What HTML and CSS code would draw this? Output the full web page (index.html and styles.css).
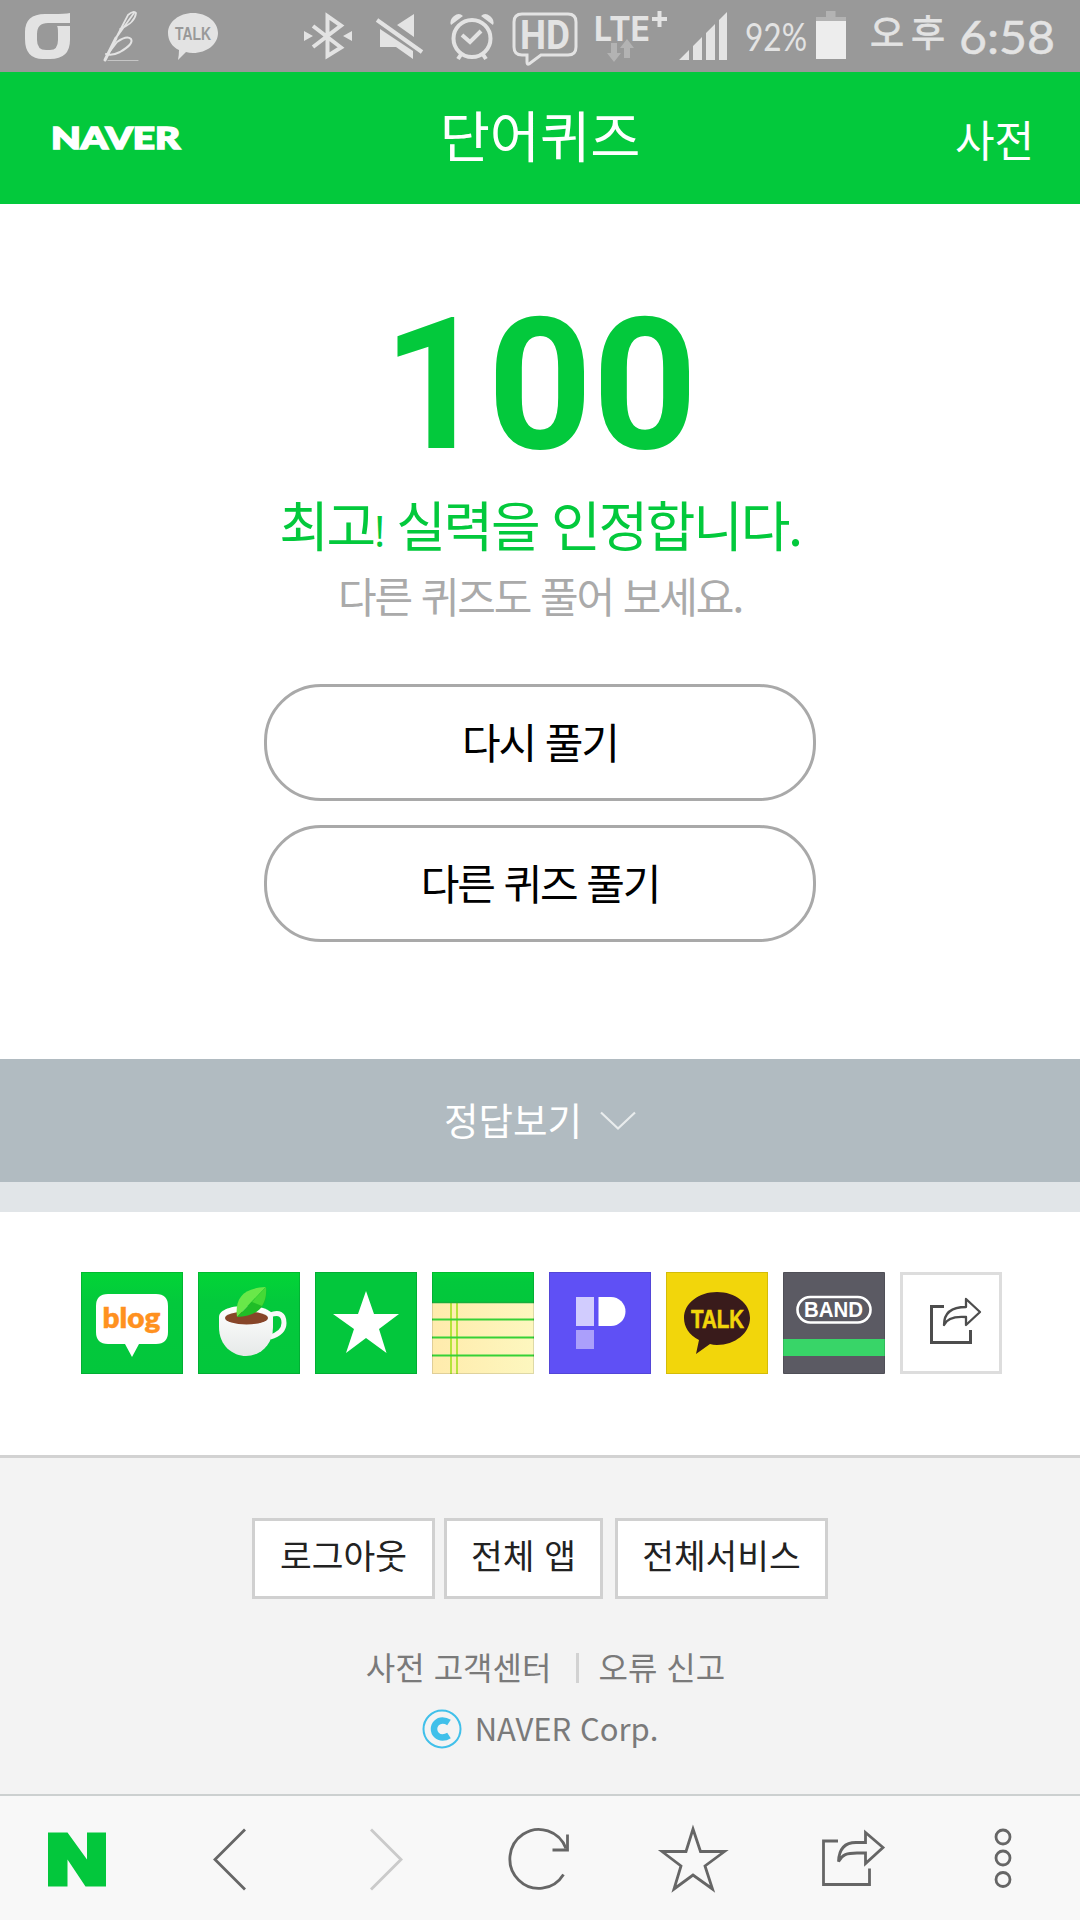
FILE: index.html
```html
<!DOCTYPE html>
<html lang="ko">
<head>
<meta charset="utf-8">
<title>단어퀴즈</title>
<link rel="stylesheet" href="styles.css">
</head>
<body>
<div class="status">
  <svg class="status-left" width="240" height="72" viewBox="0 0 240 72">
    <path fill="#e3e3e3" d="M70 13v10H48q-11 0-11 11v6q0 10 9 10h4q8 0 8-10v-7q0-6-1-7h13v14q0 19-20 19h-7q-18 0-18-20v-7q0-18 20-18h8q12 0 17-1z"/>
    <g fill="none" stroke="#e3e3e3" stroke-linecap="round">
      <path stroke-width="3" d="M105 60L116 38"/>
      <path stroke-width="1.800" d="M116 38L128 15q6-5 8-2q-1 10-16 16M116 38L134 13"/>
      <path stroke-width="2" d="M106 54q6 2 14-2q14-8 11-13q-4-4-14 3l-7 9"/>
      <path stroke-width="1.200" opacity=".6" d="M108 60.500h30"/>
    </g>
    <path fill="#e3e3e3" d="M193 13c14 0 25 9 25 20s-11 20-25 20q-4 0-7-1l-8 8q1-6 1-10c-7-3-11-10-11-17c0-11 11-20 25-20z"/>
    <text x="175" y="39.500" class="talk-small" textLength="36" lengthAdjust="spacingAndGlyphs">TALK</text>
  </svg>
  <svg class="status-right" width="790" height="72" viewBox="290 0 790 72">
    <g fill="none" stroke="#e3e3e3" stroke-width="4">
      <path d="M313 26L341 47.500L327.500 56V16L341 25.500L313 47"/>
      <path d="M377 20L422 52"/>
      <circle cx="472" cy="38.500" r="18.500"/>
      <path d="M462 35l8 7l11-11M462 53l-4 6M482 53l4 6"/>
      <path d="M522 14h46q8 0 8 8v25q0 8-8 8h-27l-12 9q-2 1-2-2v-7h-5q-8 0-8-8V22q0-8 8-8z" stroke-width="3"/>
    </g>
    <g fill="#e3e3e3">
      <path d="M304 31l9 5l-9 5zM352 31l-9 5l9 5zM397 25l17-11v23zM380 29l33 22v8l-17-12h-16z"/>
      <path d="M451 25q-2-5 3-9q5-4 9 0zM493 25q2-5-3-9q-5-4-9 0z"/>
      <path d="M679 60l10-10v10zM693 46l9-9v23h-9zM706 33l9-9v36h-9zM719 20l8-8v48h-8z"/>
      <rect x="816" y="21" width="30" height="38" fill="#ededed"/>
    </g>
    <path fill="#b3b3b3" d="M816 17h10v-6h9.500v6h10.500v4h-30zM611 43h6v10h4l-7 9l-7-9h4zM624 58h6V48h4l-7-9l-7 9h4z"/>
    <text x="520" y="49" class="hd" textLength="50" lengthAdjust="spacingAndGlyphs">HD</text>
    <text x="594" y="41" class="lte" textLength="56" lengthAdjust="spacingAndGlyphs">LTE</text>
    <path d="M652 19h15M659.500 11v16" stroke="#e3e3e3" stroke-width="4"/>
    <text x="745" y="51" class="battery-text" textLength="62" lengthAdjust="spacingAndGlyphs">92%</text>
    <text x="870" y="47" class="meridiem" textLength="75" lengthAdjust="spacing">오후</text>
    <text x="959" y="54" class="clock" textLength="96" lengthAdjust="spacingAndGlyphs">6:58</text>
  </svg>
</div>

<header class="header">
  <svg class="logo" width="140" height="50" viewBox="0 0 140 50"><text x="1" y="36" textLength="129" lengthAdjust="spacingAndGlyphs">NAVER</text></svg>
  <h1>단어퀴즈</h1>
  <a class="dict">사전</a>
</header>

<main class="result">
  <div class="score">100</div>
  <p class="praise">최고<span class="bang">!</span> 실력을 인정합니다.</p>
  <p class="hint">다른 퀴즈도 풀어 보세요.</p>
  <div class="actions">
    <button>다시 풀기</button>
    <button>다른 퀴즈 풀기</button>
  </div>
</main>

<div class="answers">
  <span>정답보기</span>
  <svg width="36" height="20" viewBox="0 0 36 20"><path d="M1 1.500l17 16l17-16" fill="none" stroke="#e9eced" stroke-width="2.200"/></svg>
</div>

<section class="share">
  <svg class="tile" viewBox="0 0 102 102">
    <defs>
      <linearGradient id="green" x1="0" y1="0" x2="0" y2="1"><stop offset="0" stop-color="#02d536"/><stop offset=".3" stop-color="#03c93c"/><stop offset="1" stop-color="#03c73c"/></linearGradient>
      <linearGradient id="cup" x1="0" y1="0" x2="0" y2="1"><stop offset="0" stop-color="#fff"/><stop offset="1" stop-color="#e6e9e8"/></linearGradient>
      <linearGradient id="paper"><stop offset="0" stop-color="#ffebac"/><stop offset="1" stop-color="#fdf7bf"/></linearGradient>
    </defs>
    <rect width="102" height="102" fill="url(#green)"/>
    <path fill="#fff" d="M27 22h48q12 0 12 12v26q0 12-12 12H58L51 85L44 72H27q-12 0-12-12V34q0-12 12-12z"/>
    <text x="21.500" y="56" class="blog" textLength="58" lengthAdjust="spacingAndGlyphs">blog</text>
    <rect class="edge" x=".5" y=".5" width="101" height="101"/>
  </svg>
  <svg class="tile" viewBox="0 0 102 102">
    <rect width="102" height="102" fill="url(#green)"/>
    <path d="M72 43q14-5 14 8q0 10-14 14" fill="none" stroke="#f8f8f8" stroke-width="5"/>
    <path fill="url(#cup)" d="M21 45c0-15 54-15 54 0v10c0 19-14 29-27 29S21 74 21 55z"/>
    <ellipse cx="48.500" cy="46" rx="21.500" ry="6.500" fill="#874529"/>
    <path fill="#69e849" d="M39 45C37 28 43 16 68 15z"/>
    <path fill="#20bd27" d="M39 45L68 15C70 33 61 44 39 45z"/>
    <path fill="#45d936" d="M54 30L68 15Q69 26 64 34z"/>
    <rect class="edge" x=".5" y=".5" width="101" height="101"/>
  </svg>
  <svg class="tile" viewBox="0 0 102 102">
    <rect width="102" height="102" fill="#03c73c"/>
    <path fill="#fff" d="M51 19L59 42H84L64 57L71.500 81L51 66L31 81L39 57L18 42H43z"/>
    <rect class="edge" x=".5" y=".5" width="101" height="101"/>
  </svg>
  <svg class="tile" viewBox="0 0 102 102">
    <rect width="102" height="102" fill="url(#paper)"/>
    <rect width="102" height="31" fill="url(#green)"/>
    <path d="M19 31v71M25 31v71" stroke="#b5e33c" stroke-width="2"/>
    <path d="M0 47.500h102M0 65.500h102M0 83.500h102" stroke="#36d136" stroke-width="2"/>
    <path d="M0 30.500h102" stroke="#16af3c" stroke-width="1.500"/>
    <rect class="edge" x=".5" y=".5" width="101" height="101"/>
  </svg>
  <svg class="tile" viewBox="0 0 102 102">
    <rect width="102" height="102" fill="#5f50f5"/>
    <rect x="27" y="25" width="18" height="29" fill="#d1ccfe"/>
    <rect x="27" y="58" width="18" height="19" fill="#ab9ffb"/>
    <path fill="#fff" d="M49.500 25H62a14.500 14.500 0 0 1 0 29H49.500z"/>
    <rect class="edge" x=".5" y=".5" width="101" height="101"/>
  </svg>
  <svg class="tile" viewBox="0 0 102 102">
    <rect width="102" height="102" fill="#f2d60b"/>
    <path fill="#391b1b" d="M51 20c18 0 33 11 33 26S69 73 51 73q-4 0-7-1L30 82l3-14c-10-5-15-13-15-22c0-15 15-26 33-26z"/>
    <text x="25" y="56" class="talk" textLength="53" lengthAdjust="spacingAndGlyphs">TALK</text>
    <rect class="edge" x=".5" y=".5" width="101" height="101"/>
  </svg>
  <svg class="tile" viewBox="0 0 102 102">
    <rect width="102" height="102" rx="1" fill="#5b5a63"/>
    <rect y="67" width="102" height="17" fill="#38d568"/>
    <rect x="14.500" y="25" width="73" height="25.500" rx="12.700" fill="none" stroke="#fff" stroke-width="2.600"/>
    <text x="21" y="45" class="band" textLength="59" lengthAdjust="spacingAndGlyphs">BAND</text>
    <rect class="edge" x=".5" y=".5" width="101" height="101"/>
  </svg>
  <svg class="tile" viewBox="0 0 102 102">
    <rect x="1.500" y="1.500" width="99" height="99" fill="#fff" stroke="#ddd" stroke-width="3"/>
    <g fill="none" stroke="#4d4d4d" stroke-width="3"><path d="M44 34.500H31.500V70.500H70.500V58"/><path stroke-width="2.300" stroke-linejoin="round" d="M44 53C44 41 52 35 66 35V27L80 40L66 53V45C54 44 47 46 44 53z"/></g>
  </svg>
</section>

<footer class="footer">
  <nav class="links">
    <a class="logout">로그아웃</a>
    <a class="apps">전체 앱</a>
    <a class="services">전체서비스</a>
  </nav>
  <div class="support"><span>사전 고객센터</span><i></i><span>오류 신고</span></div>
  <div class="copyright">
    <svg width="40" height="40" viewBox="0 0 40 40"><circle cx="20" cy="20" r="18.500" fill="none" stroke="#40c0ea" stroke-width="2"/><path d="M27 13.500Q24 11.500 20.500 11.500A8.500 8.500 0 0 0 20.500 28.500Q24 28.500 27 26.500" fill="none" stroke="#40c0ea" stroke-width="6.500"/></svg>
    <span>NAVER Corp.</span>
  </div>
</footer>

<nav class="toolbar">
  <svg viewBox="0 1.500 154 124"><path fill="#03c73c" d="M48 38H67.500L87 65V38H106V92H85.500L67.500 65V92H48z"/></svg>
  <svg viewBox="154 1.500 154 124"><path d="M245 35L215 65L245 95"/></svg>
  <svg viewBox="309 1.500 154 124"><path stroke="#cacaca" d="M371 35L401 65L371 95"/></svg>
  <svg viewBox="463 1.500 154 124"><path d="M563.500 80A29 29.500 0 1 1 566 54"/><path d="M567.500 40V55.500H552.500"/></svg>
  <svg viewBox="617 1.500 154 124"><path d="M693 34.500L700.500 57H724.500L705 71.500L712.500 94.500L693 80.500L674 94.500L681 71.500L662 57H686z"/></svg>
  <svg viewBox="771 1.500 154 124"><path d="M838 46.500H823.500V90H869.500V74"/><path d="M838.500 67C839 54 845 48 856 48H865.500V38L883 53L865.500 69V58.500H857C847 58.500 842 60 838.500 67z"/></svg>
  <svg viewBox="926 1.500 154 124"><circle cx="1003" cy="42.500" r="7"/><circle cx="1003" cy="63.500" r="7"/><circle cx="1003" cy="85" r="7"/></svg>
</nav>
</body>
</html>
```
FILE: styles.css
```css
* { box-sizing: border-box; }
body {
  margin: 0;
  width: 1080px;
  height: 1920px;
  display: flex;
  flex-direction: column;
  overflow: hidden;
  background: #fff;
  font-family: "Noto Sans CJK KR", sans-serif;
}
svg { display: block; flex: none; }
h1, p { margin: 0; font-weight: 400; }

.status {
  height: 72px;
  flex: none;
  display: flex;
  justify-content: space-between;
  background: #999;
}
.status text { fill: #e3e3e3; }
.status .talk-small { fill: #999; font: 700 19px "Liberation Sans", sans-serif; }
.hd { font: 700 41px Roboto, sans-serif; }
.lte { font: 700 34px Inter, sans-serif; }
.battery-text { font: 400 39px Lato, sans-serif; }
.meridiem { font: 400 37px "Noto Sans CJK KR", sans-serif; stroke: #e3e3e3; stroke-width: .8px; }
.clock { font: 400 47px Lato, sans-serif; stroke: #e3e3e3; stroke-width: .5px; }

.header {
  height: 132px;
  flex: none;
  display: grid;
  grid-template-columns: 1fr auto 1fr;
  align-items: center;
  padding: 0 46px 0 46px;
  background: #03c93c;
  color: #fff;
}
.logo { margin-left: 4px; }
.logo text { font: 900 31px Lato, sans-serif; fill: #fff; stroke: #fff; stroke-width: 1.6px; }
.header h1 { padding-bottom: 8px; font-size: 54.5px; line-height: 80px; }
.dict { justify-self: end; font-size: 43px; line-height: 60px; }

.result {
  height: 855px;
  flex: none;
  display: flex;
  flex-direction: column;
  align-items: center;
  padding-top: 90px;
}
.score {
  font: 700 183px/184px Roboto, sans-serif;
  color: #03c93c;
}
.praise { margin-top: 6px; font-size: 54px; line-height: 80px; letter-spacing: -2.3px; color: #03c93c; }
.bang { font: 400 43px/1 "Open Sans", sans-serif; letter-spacing: -2px; }
.hint { margin-top: 1px; font-size: 42px; line-height: 60px; letter-spacing: -2.1px; color: #aaa; }
.actions { display: flex; flex-direction: column; gap: 24px; margin-top: 59px; }
.actions button {
  width: 552px;
  height: 117px;
  padding: 0 0 3px;
  border: 3px solid #a9a9a9;
  border-radius: 57px;
  background: #fff;
  color: #000;
  font: 400 42px/60px "Noto Sans CJK KR", sans-serif;
  letter-spacing: -2.1px;
}

.answers {
  height: 153px;
  flex: none;
  display: flex;
  align-items: center;
  justify-content: center;
  gap: 18px;
  border-bottom: 30px solid #e1e5e8;
  background: #b1bbc1;
  color: #fff;
  font-size: 37.5px;
}
.answers span { padding-bottom: 5px; }

.share {
  height: 243px;
  flex: none;
  display: flex;
  gap: 15px;
  padding: 60px 78px 0 81px;
}
.tile { width: 102px; height: 102px; }
.edge { fill: none; stroke: #000; stroke-opacity: .12; }
.blog { font: 800 29px Lato, sans-serif; fill: #ff9120; stroke: #ff9120; stroke-width: .3px; }
.talk { font: 700 25px "Liberation Sans", sans-serif; fill: #f2d60b; stroke: #f2d60b; stroke-width: .6px; }
.band { font: 700 21.5px "Liberation Sans", sans-serif; fill: #fff; }

.footer {
  height: 339px;
  flex: none;
  display: flex;
  flex-direction: column;
  align-items: center;
  padding-top: 60px;
  border-top: 3px solid #d2d2d2;
  background: #f3f3f3;
  color: #7a7a7a;
}
.links { display: flex; color: #222; }
.links a {
  height: 81px;
  border: 3px solid #d0d0d0;
  background: #fff;
  font-size: 34.5px;
  line-height: 67px;
  text-align: center;
}
.logout { width: 183px; }
.apps { width: 159px; margin-left: 9px; }
.services { width: 213px; margin-left: 12px; }
.support { display: flex; align-items: center; margin: 42px 0 0 11px; font-size: 32px; line-height: 50px; }
.support i { width: 3px; height: 30px; margin: 3px 19px 0 25px; background: #d2d2d2; }
.copyright { display: flex; align-items: center; gap: 13px; margin-top: 12px; font-size: 31px; line-height: 50px; }
.copyright span { padding-bottom: 1px; }

.toolbar {
  flex: 1;
  display: grid;
  grid-template-columns: repeat(7, 1fr);
  border-top: 2px solid #ccd0d0;
  background: #f8f8f8;
}
.toolbar svg { width: 154px; height: 124px; fill: none; stroke: #666; stroke-width: 2.8px; }
.toolbar svg:first-child { stroke: none; }
```
